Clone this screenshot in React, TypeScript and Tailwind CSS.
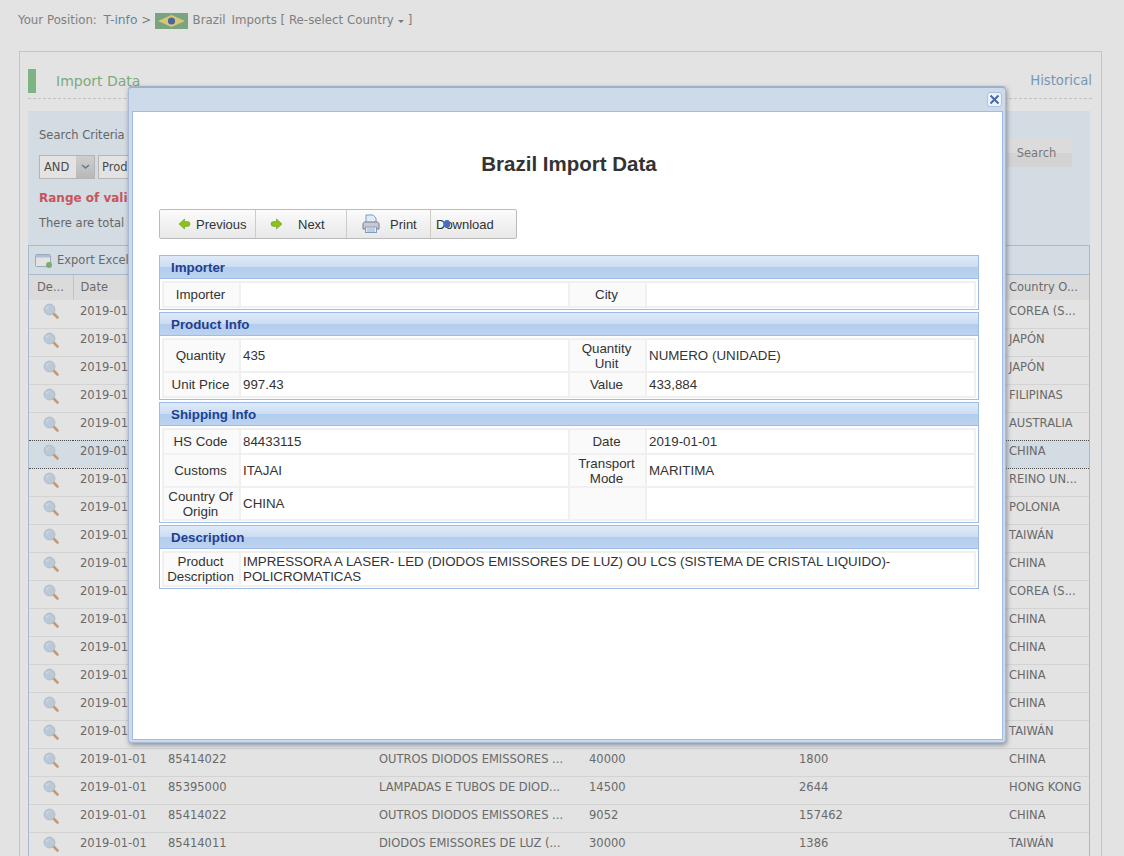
import React from 'react';

const rows = [
  { country: 'COREA (S...' },
  { country: 'JAPÓN' },
  { country: 'JAPÓN' },
  { country: 'FILIPINAS' },
  { country: 'AUSTRALIA' },
  { country: 'CHINA', active: true },
  { country: 'REINO UN...' },
  { country: 'POLONIA' },
  { country: 'TAIWÁN' },
  { country: 'CHINA' },
  { country: 'COREA (S...' },
  { country: 'CHINA' },
  { country: 'CHINA' },
  { country: 'CHINA' },
  { country: 'CHINA' },
  { country: 'TAIWÁN' },
  { country: 'CHINA', hs: '85414022', name: 'OUTROS DIODOS EMISSORES ...', qty: '40000', val: '1800' },
  { country: 'HONG KONG', hs: '85395000', name: 'LAMPADAS E TUBOS DE DIOD...', qty: '14500', val: '2644' },
  { country: 'CHINA', hs: '85414022', name: 'OUTROS DIODOS EMISSORES ...', qty: '9052', val: '157462' },
  { country: 'TAIWÁN', hs: '85414011', name: 'DIODOS EMISSORES DE LUZ (...', qty: '30000', val: '1386' },
];

const Magnifier = () => (
  <svg width="16" height="16" viewBox="0 0 16 16" className="mx-auto block">
    <path d="M10.5 10.5l4 4" stroke="#dcae88" strokeWidth="2.6" strokeLinecap="round" />
    <circle cx="6.5" cy="6.5" r="5.4" fill="#d3e2f2" stroke="#c2d4e6" strokeWidth="1" />
    <path d="M3.5 6a3 3 0 0 1 2.5-2.5" fill="none" stroke="#eef5fc" strokeWidth="1.2" />
  </svg>
);

const Arrow = ({ flip }: { flip?: boolean }) => (
  <svg width="13" height="12" viewBox="0 0 12 12" className={flip ? 'rotate-180' : ''}>
    <path d="M0.5 6L6 1v2.6h2.5a3 2.4 0 0 1 0 4.8H6V11z" fill="#8cc21f" stroke="#6b9e14" strokeWidth="0.6" />
  </svg>
);

const Printer = () => (
  <svg width="20" height="20" viewBox="0 0 20 20">
    <path d="M5 1h7l3 3v6H5z" fill="#dfeafa" stroke="#7d9cc6" />
    <path d="M2 10c0-1 1-2 2-2h12c1 0 2 1 2 2v5H2z" fill="#c9cbd0" stroke="#777b85" />
    <rect x="4.5" y="13" width="11" height="5.5" fill="#eef2f8" stroke="#7d9cc6" />
    <path d="M6 15h8M6 17h8" stroke="#9aa6b8" />
  </svg>
);

const Section = ({ title, children }: { title: string; children: React.ReactNode }) => (
  <div className="border border-[#9dbde8]">
    <div className="h-[23px] border-b border-[#9dbde8] bg-[linear-gradient(#dfeaf8_0%,#cbddf3_50%,#b4cdee_52%,#bcd3f0_100%)] pl-[11px] text-[13.33px] font-bold leading-[24px] text-[#1f3f8f]">
      {title}
    </div>
    <div className="px-[2px] pb-px pt-[2px]">
      <table className="w-full table-fixed border-collapse">
        <colgroup>
          <col className="w-[77px]" />
          <col className="w-[329px]" />
          <col className="w-[77px]" />
          <col />
        </colgroup>
        <tbody>{children}</tbody>
      </table>
    </div>
  </div>
);

const Label = ({ children }: { children?: React.ReactNode }) => (
  <td className="border-2 border-[#f0f0f0] bg-[#fafafa] py-0 pl-0 pr-[2px] text-center align-middle text-[#333]">{children}</td>
);

const Value = ({ children, span }: { children?: React.ReactNode; span?: number }) => (
  <td colSpan={span} className="border-2 border-[#f0f0f0] bg-white px-[2px] py-0 align-middle text-[#333]">{children}</td>
);

export default function App() {
  return (
    <div className="relative h-[856px] overflow-hidden bg-white font-['DejaVu_Sans',sans-serif] text-[11.5px] text-[#777]">
      {/* Breadcrumb */}
      <div className="flex h-[39px] items-center pl-[18px] pt-[2px] text-[11.8px] text-[#909090]">
        <span>Your Position:&nbsp;</span>
        <span className="ml-[3px] text-[12.3px] text-[#7396b4]">T-info</span>
        <span>&nbsp;&gt;&nbsp;</span>
        <svg width="33" height="16" viewBox="0 0 33 16" className="mr-px">
          <rect width="33" height="16" fill="#88b98e" />
          <path d="M16.5 2L30 8 16.5 14 3 8z" fill="#f0e08a" />
          <circle cx="16.5" cy="8" r="3.6" fill="#5672a8" />
        </svg>
        <span>&nbsp;Brazil</span>
        <span className="ml-[6px]">Imports [ Re-select Country</span>
        <svg width="8" height="8" viewBox="0 0 8 8" className="mx-[3px]">
          <path d="M1 3h6L4 6z" fill="#888" />
        </svg>
        <span>]</span>
      </div>

      {/* Main panel */}
      <div className="mx-[19px] mt-[12px] w-[1083px] border border-[#ddd] px-[8px] pt-[17px]">
        <div className="flex h-[30px] w-[1064px] items-start border-b border-dashed border-[#d8d8d8]">
          <div className="h-[24px] w-[8px] bg-[#8ccb94]" />
          <div className="ml-[20px] flex-1 pt-[2px] text-[14px] leading-[20px] text-[#8cbf8c]">Import Data</div>
          <div className="pt-[2px] text-[13.2px] leading-[20px] text-[#86aacb]">Historical</div>
        </div>

        <div className="relative mt-[12px] h-[134px] w-[1062px] bg-[#eef6ff] px-[11px] pt-[16px]">
          <div className="leading-[16px] text-[#737373]">Search Criteria</div>
          <div className="mt-[12px] flex h-[24px] gap-[3px]">
            <div className="flex w-[56px] border border-[#ccc] bg-white">
              <span className="flex-1 pl-[4px] leading-[22px] text-[#555]">AND</span>
              <span className="flex w-[18px] items-center justify-center bg-[linear-gradient(#e8e8e8,#cfcfcf)]">
                <svg width="9" height="6" viewBox="0 0 9 6"><path d="M1 1l3.5 3L8 1" fill="none" stroke="#6f88a8" strokeWidth="1.6" /></svg>
              </span>
            </div>
            <div className="w-[120px] border border-[#ccc] bg-white pl-[3px] leading-[22px] text-[#555]">Product</div>
          </div>
          <div className="mt-[11px] text-[12px] font-bold leading-[16px] text-[#e0606a]">Range of valid data</div>
          <div className="mt-[9px] leading-[16px] text-[#737373]">There are total</div>
          <div className="absolute left-[979px] top-[27px] h-[29px] w-[65px] rounded-[2px] bg-[linear-gradient(#f7f7f7_50%,#eeeeee_50%)] pr-[6px] pt-px text-center leading-[29px] text-[#888]">
            Search
          </div>
        </div>

        <div className="w-[1062px] border border-b-0 border-[#bcd0ea]">
          <div className="flex h-[29px] items-center gap-[4px] border-b border-[#bcd0ea] bg-[#eef6ff] pl-[6px] pt-[2px]">
            <svg width="18" height="16" viewBox="0 0 18 16">
              <rect x="0.5" y="1.5" width="15" height="12" rx="1" fill="#fff" stroke="#aebfd6" />
              <rect x="1" y="2" width="14" height="2.5" fill="#c6d6ec" />
              <circle cx="14" cy="12" r="3" fill="#8fc47a" />
            </svg>
            <span className="text-[#777]">Export Excel</span>
          </div>
          <table className="w-full table-fixed border-collapse">
            <colgroup>
              <col className="w-[44px]" />
              <col className="w-[87px]" />
              <col className="w-[211px]" />
              <col className="w-[210px]" />
              <col className="w-[210px]" />
              <col className="w-[210px]" />
              <col />
            </colgroup>
            <thead>
              <tr className="h-[25px] bg-[#f7f7f7] text-left font-normal">
                <th className="border-r border-[#ddd] pl-[8px] font-normal">De...</th>
                <th className="pl-[7px] font-normal" colSpan={5}>Date</th>
                <th className="pl-[8px] font-normal">Country O...</th>
              </tr>
            </thead>
            <tbody>
              {rows.map((r, i) => (
                <tr
                  key={i}
                  className={
                    r.active
                      ? 'h-[28px] border-y border-dotted border-[#555] bg-[#eef6ff] [&>td]:pb-[5px]'
                      : rows[i + 1]?.active
                        ? 'h-[28px] [&>td]:pb-[5px]'
                        : 'h-[28px] border-b border-[#eee] [&>td]:pb-[5px]'
                  }
                >
                  <td><Magnifier /></td>
                  <td className="whitespace-nowrap pl-[7px]">2019-01-01</td>
                  <td className="pl-[8px]">{r.hs}</td>
                  <td className="whitespace-nowrap pl-[8px]">{r.name}</td>
                  <td className="pl-[8px]">{r.qty}</td>
                  <td className="pl-[8px]">{r.val}</td>
                  <td className="whitespace-nowrap pl-[8px]">{r.country}</td>
                </tr>
              ))}
            </tbody>
          </table>
        </div>
      </div>

      {/* Overlay */}
      <div className="absolute inset-0 bg-black/[0.11]" />

      {/* Dialog */}
      <div className="absolute left-[128px] top-[86px] flex h-[657px] w-[878px] flex-col rounded-[4px] border border-[#a9bbd4] border-t-2 border-t-[#a0b0c8] bg-[#cddaea] pb-[2px] pl-[3px] pr-[2px] shadow-[1px_2px_5px_rgba(60,70,90,0.55)] font-['Liberation_Sans',sans-serif] text-[13.33px] leading-[15px]">
        <div className="relative h-[23px] shrink-0">
          <div className="absolute right-px top-[4px] flex h-[15px] w-[15px] items-center justify-center rounded-[3px] border border-[#a9c2e8] bg-[#eef4fc]">
            <svg width="11" height="11" viewBox="0 0 11 11">
              <path d="M1.5 1.5l8 8M9.5 1.5l-8 8" stroke="#4a68a8" strokeWidth="2" />
            </svg>
          </div>
        </div>
        <div className="flex-1 border border-[#9dbde8] bg-white pl-[26px] pr-[23px]">
          <h1 className="mt-[40px] text-center text-[20.5px] font-bold leading-[24px] text-[#333]">Brazil Import Data</h1>

          <div className="mt-[33px] flex h-[30px] w-[358px] rounded-[2px] border border-[#bbb] bg-[linear-gradient(#fbfbfb,#e8e8e8)] text-[13px] text-[#333]">
            <div className="flex w-[96px] items-center gap-[5px] border-r border-[#ccc] pl-[18px]"><Arrow />Previous</div>
            <div className="flex w-[91px] items-center border-r border-[#ccc] pl-[14px]"><Arrow flip /><span className="ml-[15px]">Next</span></div>
            <div className="flex w-[84px] items-center border-r border-[#ccc] pl-[14px]"><Printer /><span className="ml-[9px]">Print</span></div>
            <div className="relative flex flex-1 items-center pl-[5px]">
              Download
              <span className="absolute left-[13px] top-[10px] h-[8px] w-[6px] rounded-full bg-[#3f6fc4]" />
            </div>
          </div>

          <div className="mt-[16px] flex w-[820px] flex-col gap-[2px]">
            <Section title="Importer">
              <tr className="h-[25px]">
                <Label>Importer</Label><Value /><Label>City</Label><Value />
              </tr>
            </Section>
            <Section title="Product Info">
              <tr className="h-[33px]">
                <Label>Quantity</Label><Value>435</Value><Label>Quantity Unit</Label><Value>NUMERO (UNIDADE)</Value>
              </tr>
              <tr className="h-[25px]">
                <Label>Unit Price</Label><Value>997.43</Value><Label>Value</Label><Value>433,884</Value>
              </tr>
            </Section>
            <Section title="Shipping Info">
              <tr className="h-[25px]">
                <Label>HS Code</Label><Value>84433115</Value><Label>Date</Label><Value>2019-01-01</Value>
              </tr>
              <tr className="h-[33px]">
                <Label>Customs</Label><Value>ITAJAI</Value><Label>Transport Mode</Label><Value>MARITIMA</Value>
              </tr>
              <tr className="h-[33px]">
                <Label>Country Of Origin</Label><Value>CHINA</Value><Label /><Value />
              </tr>
            </Section>
            <Section title="Description">
              <tr className="h-[34px]">
                <Label>Product Description</Label>
                <Value span={3}>IMPRESSORA A LASER- LED (DIODOS EMISSORES DE LUZ) OU LCS (SISTEMA DE CRISTAL LIQUIDO)-POLICROMATICAS</Value>
              </tr>
            </Section>
          </div>
        </div>
      </div>
    </div>
  );
}
